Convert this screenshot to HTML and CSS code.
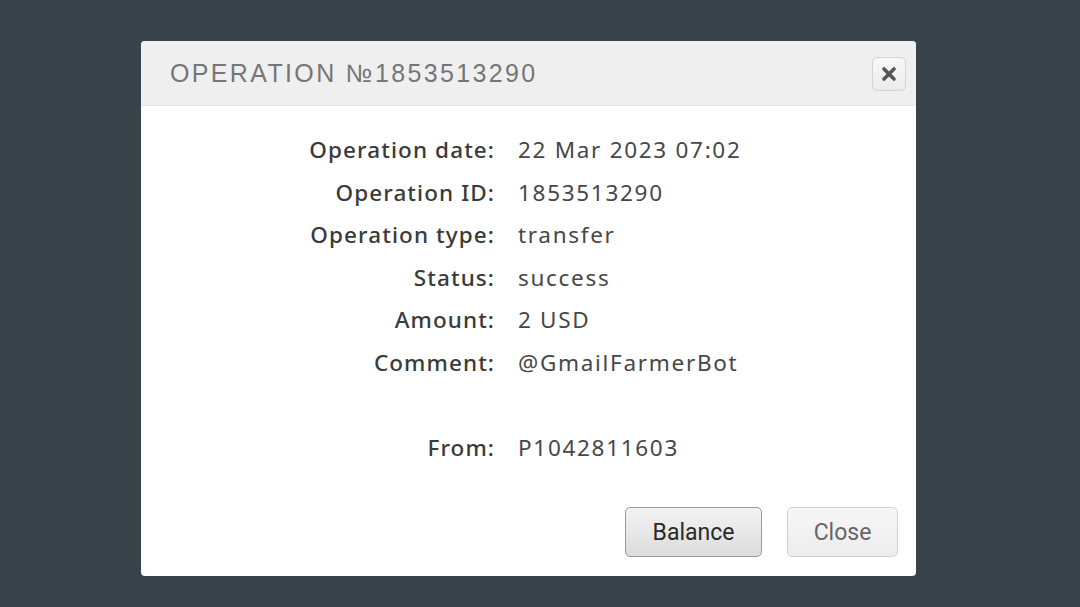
FILE: index.html
```html
<!DOCTYPE html>
<html>
<head>
<meta charset="utf-8">
<link rel="stylesheet" href="styles.css">
</head>
<body>
<div class="overlay">
  <div class="dialog">
    <div class="dialog-head">
      <h1 class="dialog-title">OPERATION №1853513290</h1>
      <button class="x-btn" aria-label="close">
        <svg width="18" height="18" viewBox="0 0 18 18"><path d="M4 4 L14 14 M14 4 L4 14" stroke="#555" stroke-width="3.6" stroke-linecap="round"/></svg>
      </button>
    </div>
    <div class="dialog-body">
      <div class="details">
        <div class="lbl">Operation date:</div><div class="val">22 Mar 2023 07:02</div>
        <div class="lbl">Operation ID:</div><div class="val">1853513290</div>
        <div class="lbl">Operation type:</div><div class="val">transfer</div>
        <div class="lbl">Status:</div><div class="val">success</div>
        <div class="lbl">Amount:</div><div class="val">2 USD</div>
        <div class="lbl">Comment:</div><div class="val">@GmailFarmerBot</div>
        <div class="lbl gap"></div><div class="val gap"></div>
        <div class="lbl">From:</div><div class="val">P1042811603</div>
      </div>
    </div>
    <div class="dialog-foot">
      <button class="btn btn-main">Balance</button>
      <button class="btn btn-light">Close</button>
    </div>
  </div>
</div>
</body>
</html>
```

FILE: styles.css
```css
html, body {
  margin: 0;
  height: 100%;
}
body {
  background: #37424b;
  font-family: "Noto Sans", sans-serif;
}
.overlay {
  height: 100%;
  padding: 41px 0 0 141px;
  box-sizing: border-box;
}
.dialog {
  width: 775px;
  height: 535px;
  background: #fff;
  border-radius: 4px;
  overflow: hidden;
  display: flex;
  flex-direction: column;
}
.dialog-head {
  height: 64px;
  background: #efefef;
  display: flex;
  align-items: center;
  justify-content: space-between;
  padding: 0 10px 0 29px;
  border-bottom: 1px solid #e6e6e6;
}
.dialog-title {
  margin: 0;
  font-family: "Liberation Sans", sans-serif;
  font-weight: normal;
  font-size: 25px;
  letter-spacing: 2.35px;
  color: #767676;
}
.x-btn {
  width: 34px;
  height: 34px;
  border: 1px solid #d4d4d4;
  border-radius: 5px;
  background: linear-gradient(#f8f8f8, #ececec);
  display: flex;
  align-items: center;
  justify-content: center;
  padding: 0;
  margin-top: 1px;
}
.dialog-body {
  flex: 1;
  padding-top: 23px;
}
.details {
  display: grid;
  grid-template-columns: 353px auto;
  column-gap: 24px;
  font-size: 22.5px;
  line-height: 42.6px;
}
.lbl {
  text-align: right;
  font-weight: 500;
  letter-spacing: 1.1px;
  margin-right: -1.1px;
  color: #3a3a3a;
}
.val {
  letter-spacing: 1.7px;
  color: #474747;
}
.gap {
  height: 42.6px;
}
.dialog-foot {
  display: flex;
  justify-content: flex-end;
  gap: 25px;
  padding: 0 18px 19px 0;
}
.btn {
  height: 50px;
  border-radius: 5px;
  font-family: "Roboto", sans-serif;
  font-size: 23px;
  padding: 0;
}
.btn-main {
  width: 137px;
  border: 1px solid #9a9a9a;
  background: linear-gradient(#f3f3f3, #dcdcdc);
  color: #2a2a2a;
}
.btn-light {
  width: 111px;
  border: 1px solid #d2d2d2;
  background: linear-gradient(#f7f7f7, #ececec);
  color: #666;
}
```
